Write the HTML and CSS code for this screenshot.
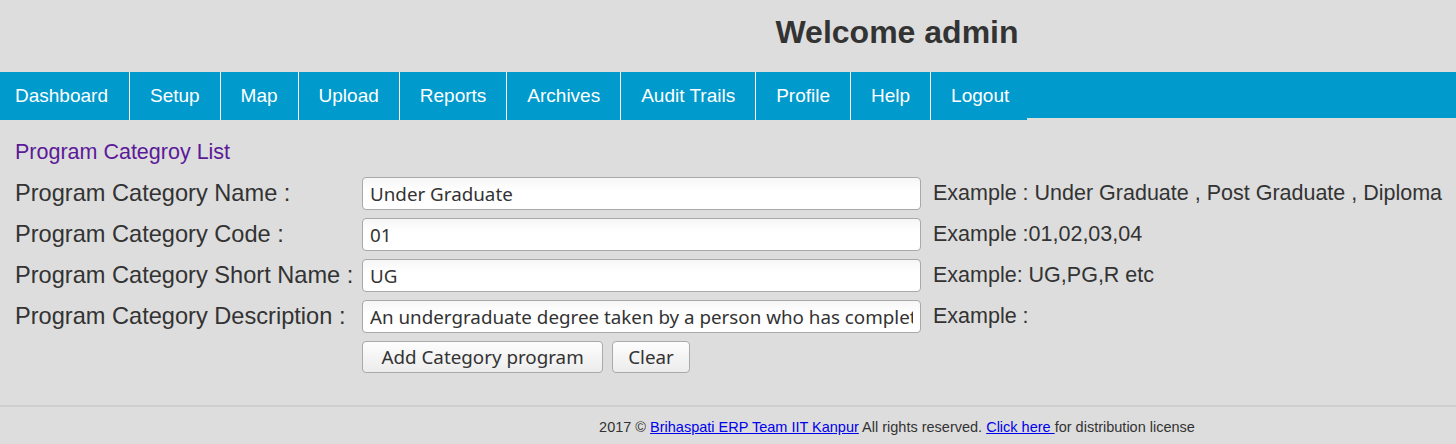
FILE: index.html
```html
<!DOCTYPE html>
<html>
<head>
<meta charset="utf-8">
<title>Program Category</title>
<link rel="stylesheet" href="styles.css">
</head>
<body>
<header class="top">
  <h1 class="welcome">Welcome admin</h1>
</header>
<nav class="menu">
  <ul class="menu-list">
    <li class="menu-item first">Dashboard</li>
    <li class="menu-item">Setup</li>
    <li class="menu-item">Map</li>
    <li class="menu-item">Upload</li>
    <li class="menu-item">Reports</li>
    <li class="menu-item">Archives</li>
    <li class="menu-item">Audit Trails</li>
    <li class="menu-item">Profile</li>
    <li class="menu-item">Help</li>
    <li class="menu-item">Logout</li>
  </ul>
</nav>
<main class="content">
  <div class="page-title">Program Categroy List</div>
  <form class="form-grid">
    <label class="label">Program Category Name :</label>
    <input class="field" type="text" value="Under Graduate">
    <span class="example">Example : Under Graduate , Post Graduate , Diploma</span>

    <label class="label">Program Category Code :</label>
    <input class="field" type="text" value="01">
    <span class="example">Example :01,02,03,04</span>

    <label class="label">Program Category Short Name :</label>
    <input class="field" type="text" value="UG">
    <span class="example">Example: UG,PG,R etc</span>

    <label class="label">Program Category Description :</label>
    <input class="field" type="text" value="An undergraduate degree taken by a person who has completed secondary education">
    <span class="example">Example :</span>

    <span class="label"></span>
    <div class="buttons">
      <button class="btn btn-wide" type="button">Add Category program</button>
      <button class="btn" type="button">Clear</button>
    </div>
    <span></span>
  </form>
</main>
<footer class="footer">
  <p class="footer-text">2017 © <a href="#" class="flink">Brihaspati ERP Team IIT Kanpur</a> All rights reserved. <a href="#" class="flink">Click here </a>for distribution license</p>
</footer>
</body>
</html>
```
FILE: styles.css
```css
html, body {
  margin: 0;
  padding: 0;
  background: #dddddd;
  font-family: "Liberation Sans", Arial, sans-serif;
  color: #333333;
}
.top {
  height: 72px;
  padding-left: 338px;
  display: flex;
  align-items: flex-start;
  justify-content: center;
}
.welcome {
  margin: 14px 0 0 0;
  font-size: 32px;
  font-weight: bold;
  color: #333333;
  line-height: 37px;
}
.menu {
  height: 46px;
  background: #009acd;
}
.menu-list {
  list-style: none;
  margin: 0;
  padding: 0;
  display: flex;
  height: 48px;
  width: 1027px;
  background: #009acd;
}
.menu-item {
  height: 48px;
  line-height: 47px;
  padding: 0 20px;
  font-size: 19px;
  color: #ffffff;
  border-right: 1px solid #ffffff;
  white-space: nowrap;
}
.menu-item.first {
  padding-left: 15px;
  padding-right: 21px;
}
.menu-item:last-child {
  border-right: none;
  flex: 1;
}
.content {
  padding: 22px 0 0 15px;
  height: 265px;
}
.page-title {
  font-size: 21.5px;
  color: #5b1a98;
  line-height: 25px;
  margin-bottom: 12px;
}
.form-grid {
  display: grid;
  grid-template-columns: 335px 559px auto;
  column-gap: 12px;
  row-gap: 8px;
  align-items: center;
}
.label {
  font-size: 23.6px;
  color: #333333;
  white-space: nowrap;
}
.field {
  box-sizing: border-box;
  height: 33px;
  width: 559px;
  margin: 0;
  padding: 0 7px;
  border: 1px solid #a9a9a9;
  border-radius: 4px;
  background: linear-gradient(#f6f6f6, #ffffff 40%);
  font-family: "Noto Sans", "DejaVu Sans", sans-serif;
  font-size: 18.8px;
  color: #333333;
}
.example {
  font-size: 21.5px;
  color: #333333;
  white-space: nowrap;
}
.buttons {
  display: flex;
  gap: 9px;
}
.btn {
  height: 32px;
  margin: 0;
  padding: 0 15px;
  border: 1px solid #aaaaaa;
  border-radius: 4px;
  background: linear-gradient(#fdfdfd, #ececec);
  font-family: "Noto Sans", "DejaVu Sans", sans-serif;
  font-size: 18.8px;
  color: #333333;
}
.btn-wide {
  padding: 0 18.5px;
}
.footer {
  border-top: 2px solid #cfcfcf;
  padding-left: 338px;
  height: 38px;
}
.footer-text {
  margin: 12px 0 0 0;
  text-align: center;
  font-size: 14.5px;
  color: #333333;
}
.flink {
  color: #0000ee;
}
```
